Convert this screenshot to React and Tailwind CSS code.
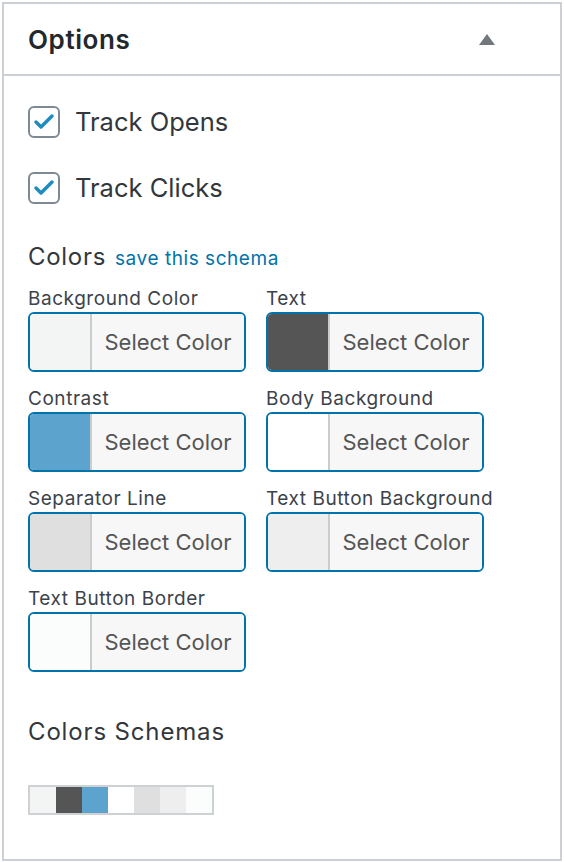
import { Check } from 'lucide-react'

const FIELDS = [
  { label: 'Background Color', color: '#f3f4f4' },
  { label: 'Text', color: '#555555' },
  { label: 'Contrast', color: '#5ca4cd' },
  { label: 'Body Background', color: '#ffffff' },
  { label: 'Separator Line', color: '#dfdfdf' },
  { label: 'Text Button Background', color: '#eeeeee' },
  { label: 'Text Button Border', color: '#fbfdfd' },
]

function Checkbox({ label }) {
  return (
    <label className="flex items-center h-[32px]">
      <span className="w-[32px] h-[32px] rounded-[6px] border-2 border-[#7e8993] flex items-center justify-center bg-white">
        <Check size={24} strokeWidth={3.5} className="text-[#1e8cbe]" />
      </span>
      <span className="ml-[15px] text-[25.5px] text-[#32373c]">{label}</span>
    </label>
  )
}

function ColorField({ label, color }) {
  return (
    <div>
      <p className="text-[19px] tracking-[0.55px] leading-[22px] text-[#3c434a] h-[22px] whitespace-nowrap">{label}</p>
      <button className="mt-[2px] flex w-[218px] h-[60px] rounded-[6px] border-2 border-[#0073aa] overflow-hidden">
        <span className="w-[62px] h-full border-r-2 border-[#cccccc]" style={{ background: color }} />
        <span className="flex-1 h-full bg-[#f7f7f7] flex items-center justify-center text-[22px] text-[#555]">Select Color</span>
      </button>
    </div>
  )
}

export default function App() {
  return (
    <div className="p-[2px] bg-white" style={{ fontFamily: 'Inter, "Noto Sans", sans-serif' }}>
      <div className="w-[560px] border-2 border-[#ccd0d4] bg-white">
        <div className="h-[72px] border-b-2 border-[#ccd0d4] flex items-center justify-between pl-[24px] pr-[65px]">
          <h2 className="text-[26px] tracking-[0.6px] font-semibold text-[#23282d]">Options</h2>
          <span className="w-0 h-0 border-l-[8px] border-r-[8px] border-b-[11px] border-l-transparent border-r-transparent border-b-[#72777c]" />
        </div>
        <div className="pl-[24px] pt-[30px] pb-[40px]">
          <Checkbox label="Track Opens" />
          <div className="mt-[34px]"><Checkbox label="Track Clicks" /></div>
          <div className="mt-[35px] flex items-baseline h-[32px]">
            <span className="text-[24px] tracking-[0.7px] text-[#32373c]">Colors</span>
            <a className="ml-[9px] text-[19px] tracking-[0.55px] text-[#0073aa]">save this schema</a>
          </div>
          <div className="mt-[17px] grid grid-cols-[218px_218px] gap-x-[20px] gap-y-[16px]">
            {FIELDS.map(f => <ColorField key={f.label} {...f} />)}
          </div>
          <h3 className="mt-[44px] text-[24px] tracking-[0.85px] text-[#32373c] leading-[32px]">Colors Schemas</h3>
          <div className="mt-[37px] inline-flex border-2 border-[#cfd2d5]">
            {FIELDS.map(f => <span key={f.label} className="w-[26px] h-[26px]" style={{ background: f.color }} />)}
          </div>
        </div>
      </div>
    </div>
  )
}
